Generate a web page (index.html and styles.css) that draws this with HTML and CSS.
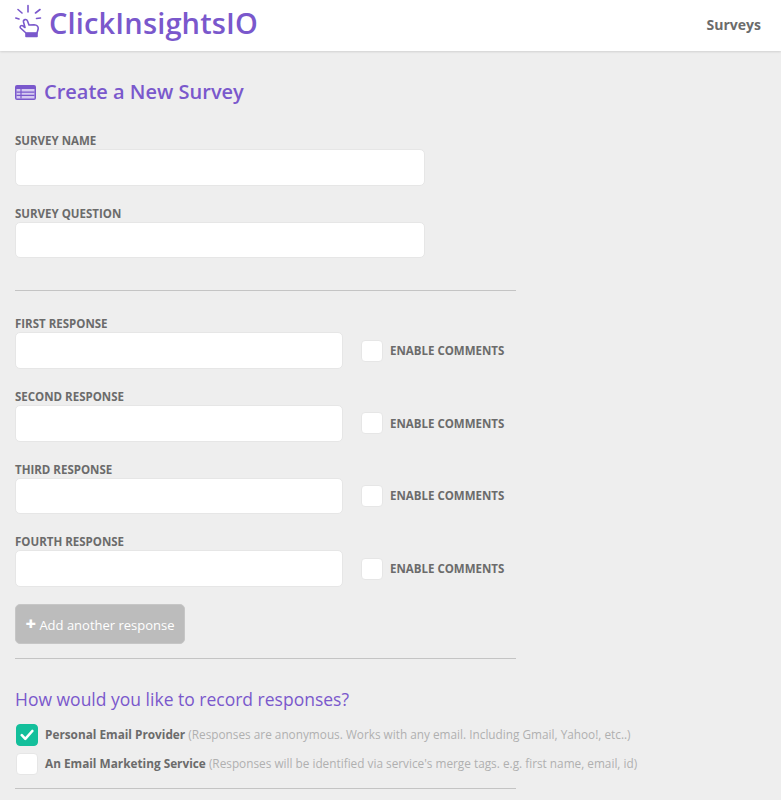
FILE: index.html
```html
<!DOCTYPE html>
<html lang="en">
<head>
    <meta charset="UTF-8">
    <meta name="viewport" content="width=device-width, initial-scale=1.0">
    <title>ClickInsightsIO</title>
    <link rel="stylesheet" href="styles.css">
</head>
<body>
    <header class="topbar">
        <a class="brand" href="#">
            <svg class="brand-icon" viewBox="15 4 27 34" fill="none" stroke="#7a58cc" stroke-width="1.6" stroke-linecap="round" stroke-linejoin="round">
                <path d="M28 5.500v6.500M18 9.500l4 3.500M40 9.500l-4.500 3.500M15.800 18l3.200 1M36.500 18.500l4-.5"/>
                <path d="M26 33l-5.500-5c-1.200-1.500 1-3.200 2.500-2l2 1.500-1.500-5.500c-.5-2.500 3-3.500 4-1l1.500 4 5 -.2c3 .3 4.500 1.500 4.200 4l-1.200 4.200z"/>
                <path d="M26 33.500h11v3h-11z" fill="#7a58cc"/>
            </svg>
            <span>ClickInsightsIO</span>
        </a>
        <nav class="topnav"><a href="#">Surveys</a></nav>
    </header>

    <main class="content">
        <h1 class="page-title">
            <svg class="title-icon" viewBox="0 0 21 15">
                <rect width="21" height="15" rx="2" fill="#7a58cc"/>
                <rect x="1.500" y="4" width="18" height="9.500" fill="#d5caf0"/>
                <path d="M6 4v9.500M1.500 7.200h18M1.500 10.400h18" stroke="#7a58cc" stroke-width="1.200"/>
            </svg>
            Create a New Survey
        </h1>

        <form class="survey-form">
            <div class="field">
                <label>SURVEY NAME</label>
                <input class="text-input wide" type="text">
            </div>
            <div class="field">
                <label>SURVEY QUESTION</label>
                <input class="text-input wide" type="text">
            </div>

            <hr class="divider divider-first">

            <div class="response">
                <label>FIRST RESPONSE</label>
                <div class="response-row">
                    <input class="text-input" type="text">
                    <span class="box"></span>
                    <span class="enable">ENABLE COMMENTS</span>
                </div>
            </div>
            <div class="response">
                <label>SECOND RESPONSE</label>
                <div class="response-row">
                    <input class="text-input" type="text">
                    <span class="box"></span>
                    <span class="enable">ENABLE COMMENTS</span>
                </div>
            </div>
            <div class="response">
                <label>THIRD RESPONSE</label>
                <div class="response-row">
                    <input class="text-input" type="text">
                    <span class="box"></span>
                    <span class="enable">ENABLE COMMENTS</span>
                </div>
            </div>
            <div class="response">
                <label>FOURTH RESPONSE</label>
                <div class="response-row">
                    <input class="text-input" type="text">
                    <span class="box"></span>
                    <span class="enable">ENABLE COMMENTS</span>
                </div>
            </div>

            <button class="add-btn" type="button"><span class="plus">+</span> Add another response</button>

            <hr class="divider">

            <h2 class="record-title">How would you like to record responses?</h2>

            <div class="option">
                <span class="box checked">
                    <svg viewBox="0 0 14 12" width="14" height="12" fill="none" stroke="#fff" stroke-width="2.600" stroke-linecap="round" stroke-linejoin="round">
                        <path d="M1.800 6.200l3.500 3.600 7-7.800"/>
                    </svg>
                </span>
                <p><strong>Personal Email Provider</strong> <span class="hint">(Responses are anonymous. Works with any email. Including Gmail, Yahoo!, etc..)</span></p>
            </div>
            <div class="option">
                <span class="box"></span>
                <p><strong>An Email Marketing Service</strong> <span class="hint">(Responses will be identified via service's merge tags. e.g. first name, email, id)</span></p>
            </div>

            <hr class="divider divider-last">
        </form>
    </main>
</body>
</html>
```

FILE: styles.css
```css
* {
    margin: 0;
    padding: 0;
    box-sizing: border-box;
    font-family: 'Open Sans', sans-serif;
}

body {
    height: 800px;
    overflow: hidden;
    background: #eeeeee;
    color: #666;
}

a {
    text-decoration: none;
}

.topbar {
    height: 51px;
    display: flex;
    justify-content: space-between;
    align-items: center;
    padding: 0 20px 0 15px;
    background: #fff;
    box-shadow: 0 1px 2px rgba(0, 0, 0, 0.12);
}

.brand {
    display: flex;
    align-items: center;
    gap: 7px;
    margin-top: -7px;
    color: #7a58cc;
    font-size: 29px;
    font-weight: 600;
    letter-spacing: 0.15px;
}

.brand-icon {
    width: 27px;
    height: 34px;
    margin-top: -2px;
}

.topnav {
    margin-top: -3px;
}

.topnav a {
    color: #6b6b6b;
    font-size: 14px;
    font-weight: 700;
}

.content {
    padding: 0 15px;
}

.page-title {
    display: flex;
    align-items: center;
    gap: 8px;
    margin-top: 27px;
    color: #7a58cc;
    font-size: 20px;
    font-weight: 600;
    line-height: 28px;
}

.title-icon {
    width: 21px;
    height: 15px;
}

.survey-form {
    width: 501px;
    margin-top: 26px;
}

label {
    display: block;
    padding-top: 1px;
    margin-bottom: 1px;
    color: #6b6b6b;
    font-size: 11.5px;
    font-weight: 700;
    line-height: 15px;
}

.field {
    margin-bottom: 19px;
}

.text-input {
    display: block;
    width: 328px;
    height: 36.67px;
    border: 1px solid #e6e6e6;
    border-radius: 5px;
    background: #fff;
    outline: none;
}

.text-input.wide {
    width: 410px;
}

.divider {
    border: none;
    border-top: 1px solid #c4c4c4;
}

.divider-first {
    margin-top: 32px;
    margin-bottom: 24px;
}

.divider-last {
    margin-top: 13px;
}

.response {
    margin-bottom: 19px;
}

.response-row {
    display: flex;
    align-items: center;
}

.box {
    flex: none;
    display: flex;
    justify-content: center;
    align-items: center;
    width: 22px;
    height: 22px;
    border: 1px solid #e6e6e6;
    border-radius: 4px;
    background: #fff;
}

.response-row .box {
    margin-left: 18px;
    margin-right: 7px;
}

.enable {
    color: #6b6b6b;
    font-size: 11.5px;
    font-weight: 700;
}

.add-btn {
    display: block;
    width: 170px;
    height: 40px;
    margin-top: -2px;
    margin-bottom: 14px;
    border: 1px solid #c6c6c6;
    border-radius: 5px;
    background: #bcbcbc;
    color: #fff;
    font-size: 13px;
}

.plus {
    font-weight: 800;
    font-size: 18px;
    line-height: 1;
}

.record-title {
    margin-top: 28px;
    margin-bottom: 12px;
    color: #7a58cc;
    font-size: 17.5px;
    font-weight: 400;
    line-height: 25px;
}

.option {
    display: flex;
    align-items: center;
    gap: 7px;
    height: 22px;
    margin-bottom: 7px;
    margin-left: 1px;
    white-space: nowrap;
}

.box.checked {
    background: #13bf9b;
    border-color: #13bf9b;
}

.option p {
    font-size: 11.8px;
    margin-top: -2px;
}

.option strong {
    color: #6b6b6b;
    font-weight: 700;
}

.hint {
    color: #b0b0b0;
}
```
